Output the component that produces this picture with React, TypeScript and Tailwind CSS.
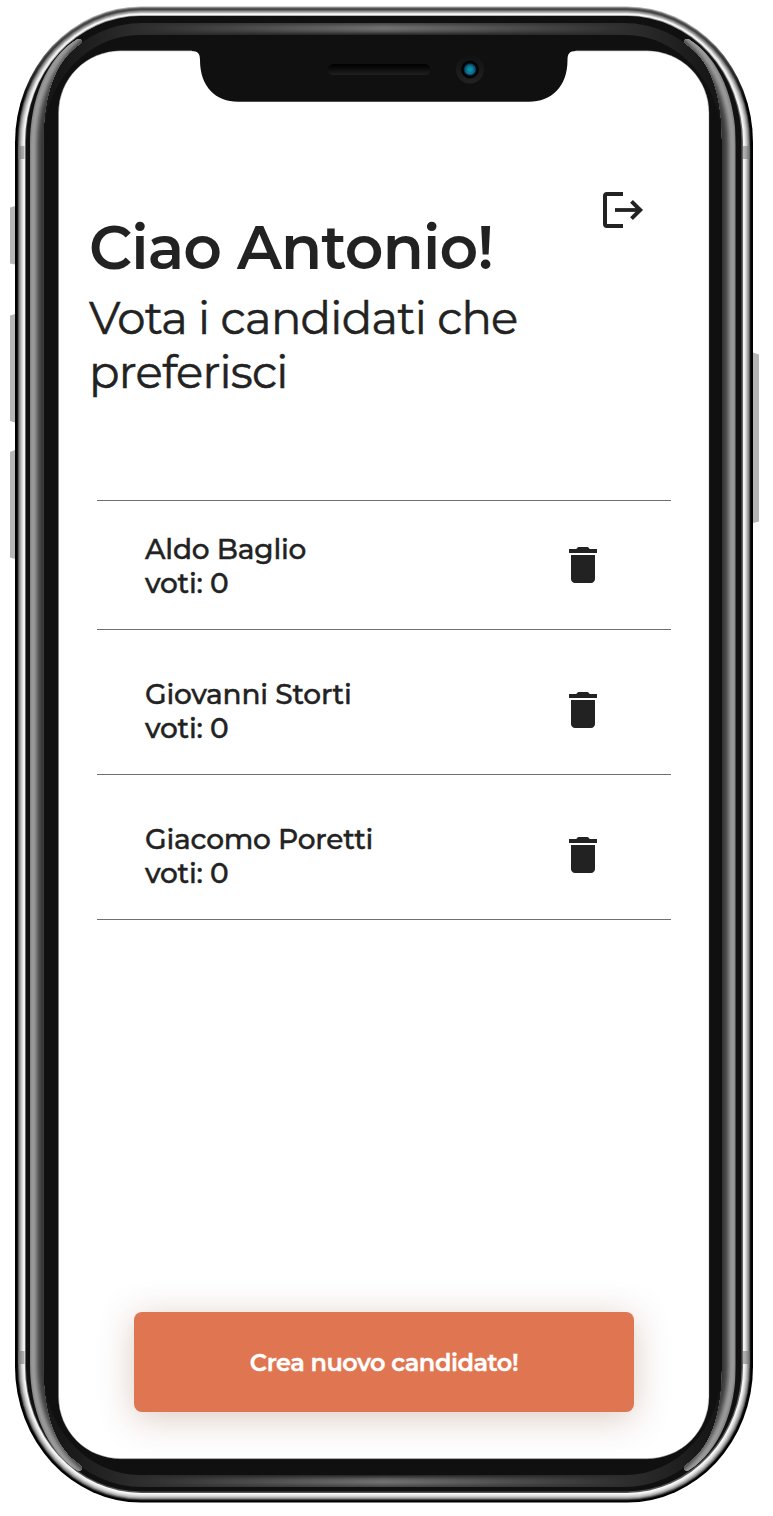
const FONT = "font-['Montserrat','Inter',sans-serif]";

type Candidate = { name: string; votes: number };

const candidates: Candidate[] = [
  { name: "Aldo Baglio", votes: 0 },
  { name: "Giovanni Storti", votes: 0 },
  { name: "Giacomo Poretti", votes: 0 },
];

// Polished steel edge, one entry per pixel from the outside in.
const steel = [
  { top: "#aaaaaa", side: "#000000", bottom: "#000000" },
  { top: "#666666", side: "#000000", bottom: "#000000" },
  { top: "#444444", side: "#101314", bottom: "#222222" },
  { top: "#4a4a4a", side: "#5a5c5c", bottom: "#666666" },
  { top: "#777777", side: "#8a8a8a", bottom: "#959595" },
  { top: "#999999", side: "#a9a9a9", bottom: "#b8b8b8" },
  { top: "#c4c4c4", side: "#c8c8c8", bottom: "#d2d2d2" },
  { top: "#eeeeee", side: "#dddddd", bottom: "#e9e5e5" },
  { top: "#ffffff", side: "#f2f2f2", bottom: "#f4eeee" },
  { top: "#999999", side: "#f4f4f4", bottom: "#ffffff" },
  { top: "#111111", side: "#666666", bottom: "#555555" },
];

// Inner bezel reflection, outside in.
const sideGlow = ["#858585", "#949494", "#999999", "#999999", "#929292", "#888888", "#777777", "#686868", "#585858", "#4b4b4b", "#444444", "#3e3e3e", "#363636"];
const endGlow = ["#4a4a4a", "#555555", "#606060", "#696969", "#707070", "#707070", "#6c6c6c", "#646464", "#585858", "#484848", "#393939", "#292929"];

function PhoneFrame() {
  return (
    <svg className="absolute inset-0 h-full w-full" viewBox="0 0 773 1516" aria-hidden="true">
      <defs>
        {steel.map((s, i) => (
          <linearGradient key={i} id={`steel${i}`} gradientUnits="userSpaceOnUse" x1="0" y1="6" x2="0" y2="1503">
            <stop offset="0" stopColor={s.top} />
            <stop offset="0.012" stopColor={s.top} />
            <stop offset="0.065" stopColor={s.side} />
            <stop offset="0.935" stopColor={s.side} />
            <stop offset="0.992" stopColor={s.bottom} />
          </linearGradient>
        ))}
        {endGlow.map((c, i) => (
          <linearGradient key={i} id={`end${i}`} gradientUnits="userSpaceOnUse" x1="60" y1="0" x2="708" y2="0">
            <stop offset="0" stopColor="#171717" />
            <stop offset="0.11" stopColor="#2b2b2b" />
            <stop offset="0.5" stopColor={c} />
            <stop offset="0.89" stopColor="#2b2b2b" />
            <stop offset="1" stopColor="#171717" />
          </linearGradient>
        ))}
        <linearGradient id="speaker" x1="0" y1="0" x2="0" y2="1">
          <stop offset="0" stopColor="#000" />
          <stop offset="0.35" stopColor="#090909" />
          <stop offset="1" stopColor="#202020" />
        </linearGradient>
        <linearGradient id="lensRing" x1="0" y1="0" x2="0" y2="1">
          <stop offset="0" stopColor="#111" />
          <stop offset="1" stopColor="#222" />
        </linearGradient>
        <radialGradient id="lens">
          <stop offset="0" stopColor="#0e9c9e" />
          <stop offset="0.45" stopColor="#0c7d95" />
          <stop offset="0.8" stopColor="#0a4770" />
          <stop offset="1" stopColor="#06172c" />
        </radialGradient>
        <clipPath id="sideBands">
          <path d="M30 145C30 100 46 58 77 39.5Q80 38 82 40.5Q82 43 76 47C55 63 43.5 95 43.5 140V1369C43.5 1414 55 1446 76 1462Q82 1466 82 1468.5Q80 1472 77 1470C46 1451 30 1409 30 1364Z" />
          <path d="M736 145C736 100 720 58 689 39.5Q686 38 684 40.5Q684 43 690 47C711 63 722 95 722 140V1369C722 1414 711 1446 690 1462Q684 1466 684 1468.5Q686 1472 689 1470C720 1451 736 1409 736 1364Z" />
        </clipPath>
      </defs>
      <g fill="#b5b5b5">
        <path d="M10 207.5L15 206V264.5L10 263.5Z" />
        <path d="M10 315.5L15 314V422.5L10 421Z" />
        <path d="M10 452L15 450V559L10 557.5Z" />
        <path d="M753 352.5L759 354.5V521.5L753 523Z" />
      </g>
      {steel.map((_, i) => (
        <rect key={i} x={15 + i} y={6.5 + i * 0.96} width={738 - 2 * i} height={1496 - i * 1.92} rx={126 - i} ry={136 - i} fill={`url(#steel${i})`} />
      ))}
      <g fill="#777" fillOpacity="0.55">
        <rect x="18" y="146" width="6.5" height="13" />
        <rect x="18" y="1351" width="6.5" height="13" />
        <rect x="743" y="146" width="7" height="13" />
        <rect x="743" y="1351" width="7" height="13" />
      </g>
      <rect x="26" y="16.5" width="715.5" height="1475" rx="115" ry="124" fill="#101010" />
      {endGlow.map((_, i) => (
        <rect key={i} x={30.5 + i} y={23 + i} width={705 - 2 * i} height={1464 - 2 * i} rx={112 - i} ry={122 - i} fill={`url(#end${i})`} />
      ))}
      <rect x="43" y="35" width="679" height="1440" rx="97" ry="108" fill="#101010" />
      <g clipPath="url(#sideBands)">
        {sideGlow.map((c, i) => (
          <rect key={i} x={30 + i} y={14 + i} width={705.5 - 2 * i} height={1481 - 2 * i} rx={i === 0 ? 0 : 100 - i} ry={i === 0 ? 0 : 130 - i} fill={c} />
        ))}
      </g>
      <rect x="58.5" y="50.8" width="650.5" height="1408" rx="62" ry="62" fill="#fff" stroke="#777" strokeWidth="0.4" />
      <path d="M192 50H575.5V51C569.5 51 567.5 54 567.5 60C567.5 87 551 101.8 529 101.8H238C216 101.8 200 87 200 60C200 54 198 51 192 51Z" fill="#101010" />
      <rect x="328" y="64" width="102.5" height="11" rx="5.5" fill="url(#speaker)" />
      <circle cx="470" cy="69.5" r="14" fill="url(#lensRing)" />
      <circle cx="470" cy="69.5" r="9" fill="#030404" />
      <circle cx="470" cy="69.5" r="6.4" fill="url(#lens)" />
      <path d="M465.5 71.5Q470 76 474.5 71.5" fill="none" stroke="#1683a0" strokeWidth="0.8" />
    </svg>
  );
}

function LogoutIcon() {
  return (
    <svg className="h-12 w-12" viewBox="0 0 48 48" fill="none" stroke="#222" strokeWidth="4" aria-hidden="true">
      <path d="M24 8H8Q6 8 6 10V38Q6 40 8 40H24" />
      <path d="M16 24H42" strokeWidth="3.8" />
      <path d="M32.5 15.3L41.2 24L32.5 32.7" />
    </svg>
  );
}

function TrashIcon() {
  return (
    <svg className="h-12 w-12" viewBox="0 0 24 24" fill="#222" aria-hidden="true">
      <path d="M6 19c0 1.1.9 2 2 2h8c1.1 0 2-.9 2-2V7H6v12Z" />
      <path d="M5 4h3.5c.4 0 .6-1 1.4-1h4.2c.8 0 1 1 1.4 1H19v2H5V4Z" />
    </svg>
  );
}

export default function App() {
  return (
    <div className={`relative h-[1516px] w-[773px] overflow-hidden bg-white text-[#222] ${FONT}`}>
      <PhoneFrame />
      <main className="relative flex h-full flex-col pt-[186px]">
        <header className="flex h-[314px] items-start justify-between pl-[90px] pr-[126px]">
          <div className="pt-[26px]">
            <h1 className="-ml-px whitespace-nowrap text-[60px] font-semibold leading-[72px] tracking-[-0.85px]">Ciao Antonio!</h1>
            <p className="-ml-px mt-[7px] whitespace-nowrap text-[45px] font-normal leading-[54px] tracking-[-0.75px] [-webkit-text-stroke:0.5px_#222]">
              Vota i candidati che
              <br />
              preferisci
            </p>
          </div>
          <button aria-label="Esci" className="-ml-20 shrink-0">
            <LogoutIcon />
          </button>
        </header>
        <ul className="ml-[97px] w-[574px] space-y-4 border-t border-[#707070]">
          {candidates.map((c) => (
            <li key={c.name} className="flex h-[129px] items-start justify-between border-b border-[#707070] pl-12 pr-16 pt-[31px]">
              <div className="whitespace-nowrap text-[28px] font-medium leading-[34px] tracking-[-0.2px] [-webkit-text-stroke:0.4px_#222]">
                <p>{c.name}</p>
                <p>voti: {c.votes}</p>
              </div>
              <button aria-label={`Elimina ${c.name}`} className="mt-[9px]">
                <TrashIcon />
              </button>
            </li>
          ))}
        </ul>
        <button className="mb-[104px] ml-[134px] mt-auto h-[100px] w-[500px] rounded-lg bg-[#e07651] pt-0.5 text-[24px] font-semibold tracking-[-0.45px] text-white shadow-[0_6px_36px_rgba(115,50,20,0.26)] [-webkit-text-stroke:0.4px_#fff]">
          Crea nuovo candidato!
        </button>
      </main>
    </div>
  );
}
